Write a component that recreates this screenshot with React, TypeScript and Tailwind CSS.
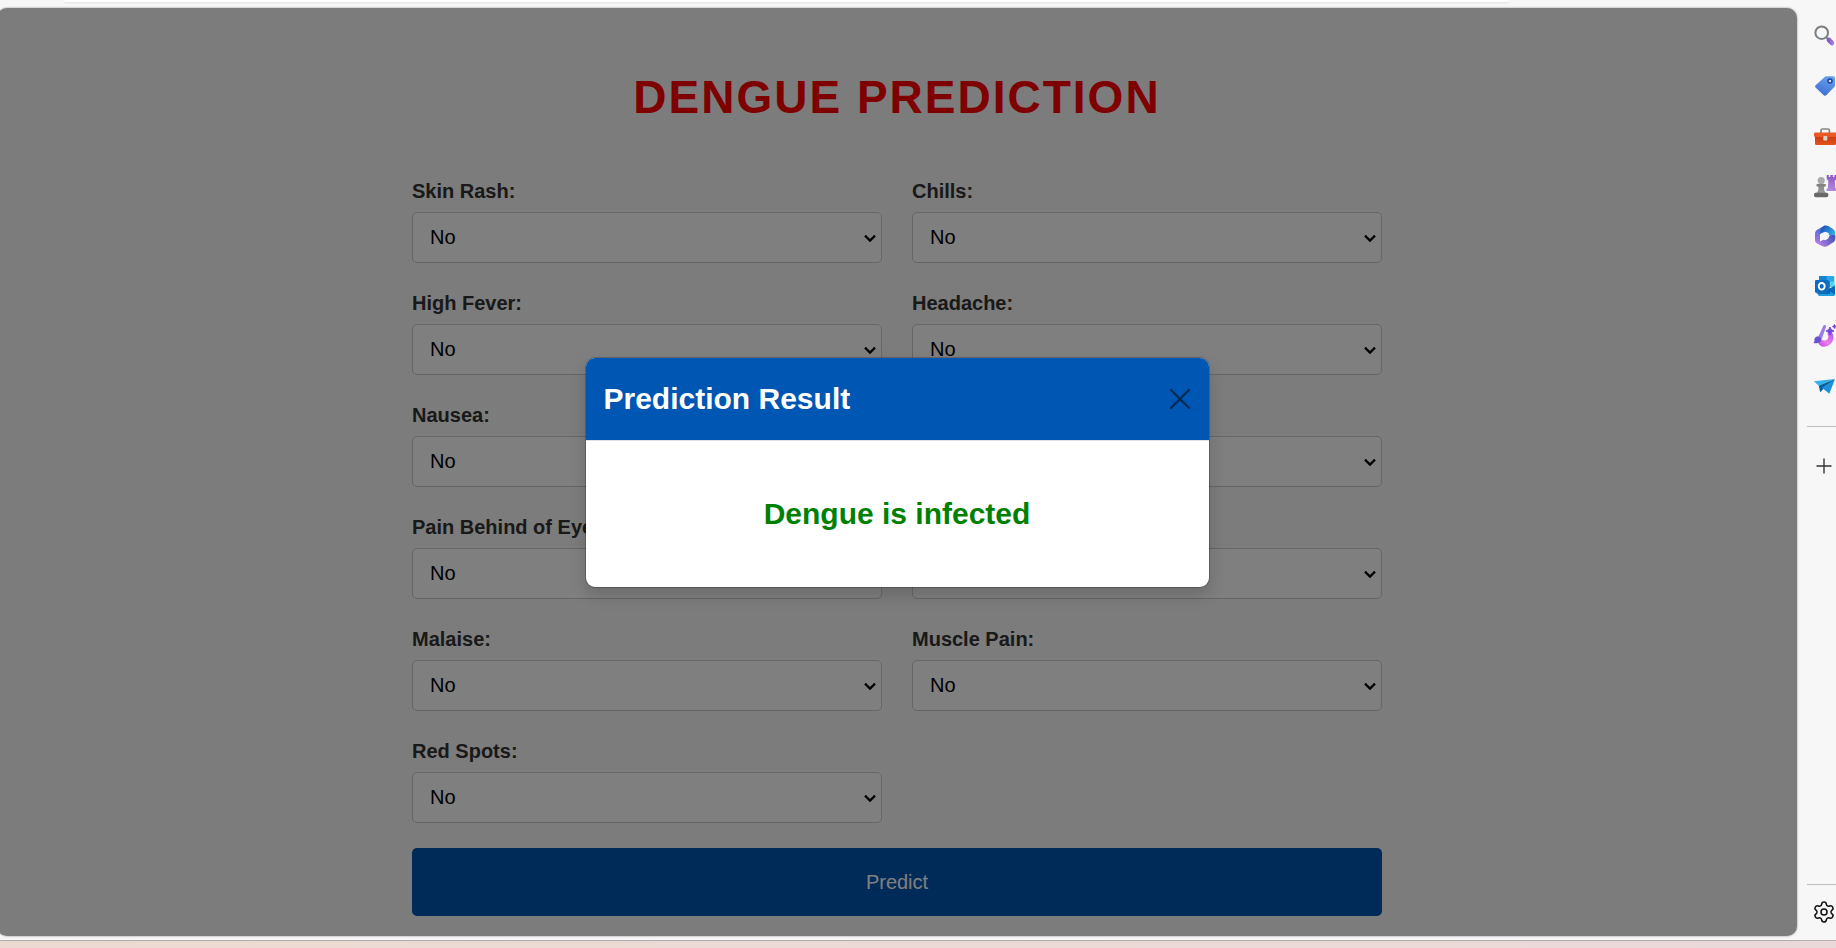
import React, { useState } from 'react';
import { Settings } from 'lucide-react';

const symptoms = [
  'Skin Rash',
  'Chills',
  'High Fever',
  'Headache',
  'Nausea',
  'Vomiting',
  'Pain Behind of Eyes',
  'Joint Pain',
  'Malaise',
  'Muscle Pain',
  'Red Spots',
];

function SymptomField({ name }: { name: string }) {
  const id = name.toLowerCase().replace(/ /g, '-');
  return (
    <div className="flex flex-col gap-1.5">
      <label htmlFor={id} className="text-[20px] leading-[30px] font-bold text-[#333333]">
        {name}:
      </label>
      <div className="relative">
        <select
          id={id}
          defaultValue="No"
          className="block h-[51px] w-full appearance-none rounded-[5px] border border-[#cccccc] bg-white px-[17px] pb-0.5 text-[20px] text-black"
        >
          <option>No</option>
          <option>Yes</option>
        </select>
        <svg
          className="pointer-events-none absolute top-1/2 right-1.5 h-3 w-3 -translate-y-1/2"
          viewBox="0 0 12 12"
          fill="none"
          stroke="#000"
          strokeWidth="2.2"
        >
          <path d="M1 3.6 6 8.6l5-5" />
        </svg>
      </div>
    </div>
  );
}

function SearchIcon() {
  return (
    <svg width="24" height="24" viewBox="0 0 24 24" fill="none">
      <path d="m13.2 13.2 2 2" stroke="#8a8a8a" strokeWidth="2" />
      <circle cx="8.7" cy="8.7" r="6.3" fill="#f4f8fa" stroke="#7d7d7d" strokeWidth="2" />
      <path d="m16 16 3 3" stroke="url(#handle)" strokeWidth="4.6" strokeLinecap="round" />
      <defs>
        <linearGradient id="handle" x1="14" y1="18" x2="21" y2="18" gradientUnits="userSpaceOnUse">
          <stop stopColor="#7b4cc2" />
          <stop offset="1" stopColor="#b183e0" />
        </linearGradient>
      </defs>
    </svg>
  );
}

function TagIcon() {
  return (
    <svg width="24" height="24" viewBox="0 0 24 24" fill="none">
      <path
        d="M11.4 3.2c.6-.7 1.3-1 2.1-1H20c1.2 0 2 .8 2 2v6.9c0 .8-.3 1.5-.8 2l-7.7 8c-.8.9-2 .9-2.8.1l-7.9-7.400c-.8-.8-.9-1.700-.2-2.500z"
        fill="url(#tag)"
      />
      <circle cx="17" cy="7" r="2" fill="#c8dcff" stroke="#23418f" strokeWidth="1.5" />
      <defs>
        <linearGradient id="tag" x1="17" y1="2" x2="10" y2="22" gradientUnits="userSpaceOnUse">
          <stop stopColor="#68a2f3" />
          <stop offset="1" stopColor="#416fd0" />
        </linearGradient>
      </defs>
    </svg>
  );
}

function ToolboxIcon() {
  return (
    <svg width="24" height="24" viewBox="0 0 24 24" fill="none">
      <path d="M8 9.5V6.600C8 5.700 8.700 5 9.600 5h5.200c.9 0 1.600.7 1.600 1.600v2.900" stroke="#858585" strokeWidth="1.7" />
      <rect x="2" y="11" width="21" height="10" rx="1.3" fill="url(#toolbox)" />
      <rect x="1" y="8.6" width="23" height="4.4" rx="1.2" fill="#ea5a24" />
      <rect x="10.3" y="12" width="4" height="4.6" rx="1.2" fill="#d8d4d2" />
      <defs>
        <linearGradient id="toolbox" x1="12" y1="12" x2="12" y2="21" gradientUnits="userSpaceOnUse">
          <stop stopColor="#c93a0b" />
          <stop offset="1" stopColor="#e2541c" />
        </linearGradient>
      </defs>
    </svg>
  );
}

function ChessIcon() {
  return (
    <svg width="24" height="24" viewBox="0 0 24 24" fill="none">
      <path
        d="M13.7 1h2.100v1.900h1.500V1h2.600v1.900h1.500V1h2.100v4.300l-1.700 1.400.5 7.200 1.400 1.300V17H13.600v-1.800l1.300-1.300.5-7.200-1.700-1.400z"
        fill="url(#rook)"
      />
      <circle cx="8.2" cy="6.6" r="3.6" fill="#a9a9a9" />
      <path d="M4.200 10h8c.9 0 1.300 2.200 0 2.600l-1.300.4c0 3 .6 5 2.700 6.500H2.800C5 18 5.500 16 5.500 13l-1.300-.4c-1.300-.4-.9-2.600 0-2.600z" fill="url(#pawn)" />
      <rect x="1" y="18.8" width="14.3" height="4.5" rx="1.8" fill="#686868" />
      <defs>
        <linearGradient id="rook" x1="19" y1="1" x2="19" y2="17" gradientUnits="userSpaceOnUse">
          <stop stopColor="#8c58c4" />
          <stop offset="1" stopColor="#b38bdc" />
        </linearGradient>
        <linearGradient id="pawn" x1="8" y1="10" x2="8" y2="20" gradientUnits="userSpaceOnUse">
          <stop stopColor="#808080" />
          <stop offset="1" stopColor="#a0a0a0" />
        </linearGradient>
      </defs>
    </svg>
  );
}

function OfficeIcon() {
  return (
    <svg width="24" height="24" viewBox="0 0 24 24" fill="none">
      <path d="M12.300 1.300 4.600 5.600C3 6.500 2 8 2 10v5.500c0 2 1 3.200 2.600 4l3.900 2.100c-1-1-1.500-2-1.500-3.600V10l7-4z" fill="url(#officeLeft)" />
      <path d="M10 2.600c1.500-1.300 3.500-1.500 5.300-.5l4.700 2.800c1.400.9 2.200 2.200 2.200 4v6.300l-6.700-4.400V9L9.500 8.500 7 10c0-3.500.8-5.900 3-7.400z" fill="url(#officeTop)" />
      <path d="M22.200 11.500v3.200c0 1.700-.8 3-2.200 3.900l-5 3.200c-2 1.200-4 1.200-6 .2l-4.400-2.400C3 18.800 2.100 17.500 2 16c1.500 2 4 2.300 6.500.8l10-6z" fill="url(#officeBottom)" />
      <path d="m12 7.800 3 .9 1.300 3-.9 2.600-2.900 1.900-3.300-1L8 12.100l1-2.700z" fill="#f7f7f7" />
      <defs>
        <linearGradient id="officeLeft" x1="10" y1="2" x2="5" y2="21" gradientUnits="userSpaceOnUse">
          <stop stopColor="#3c6bd4" />
          <stop offset="1" stopColor="#b679e4" />
        </linearGradient>
        <linearGradient id="officeTop" x1="9" y1="3" x2="22" y2="13" gradientUnits="userSpaceOnUse">
          <stop stopColor="#1c55b7" />
          <stop offset="1" stopColor="#36bdf0" />
        </linearGradient>
        <linearGradient id="officeBottom" x1="22" y1="12" x2="8" y2="22" gradientUnits="userSpaceOnUse">
          <stop stopColor="#3c50b4" />
          <stop offset="1" stopColor="#b27ce6" />
        </linearGradient>
      </defs>
    </svg>
  );
}

function OutlookIcon() {
  return (
    <svg width="24" height="24" viewBox="0 0 24 24" fill="none">
      <path d="M6 3.300C6 2.600 6.500 2 7.300 2H20c.7 0 1.300.6 1.300 1.300V13H6z" fill="#28a8ea" />
      <path d="M6 2h7.500v5.500H6z" fill="#1685cf" />
      <path d="M13.500 7.500h7.800V13h-7.800z" fill="#55d3f7" />
      <path d="m5 12.500 9 3.500 8-4v8.600c0 .8-.6 1.400-1.400 1.400H6.400c-.8 0-1.400-.6-1.400-1.400z" fill="#1b9de2" />
      <path d="M22 11.500v9.200L14 16z" fill="#0c68b7" />
      <rect x="3.5" y="7" width="13.5" height="13" rx="1.3" fill="#0b4e8d" opacity=".65" />
      <rect x="2" y="6" width="13.6" height="12.7" rx="1.3" fill="#0b6cc1" />
      <ellipse cx="8.7" cy="12.3" rx="3" ry="3.3" stroke="#fff" strokeWidth="1.9" />
    </svg>
  );
}

function DesignerIcon() {
  return (
    <svg width="24" height="24" viewBox="0 0 24 24" fill="none">
      <path d="M5 17c0-2 2-3 3.600-1.500 2.500 2.300 6.400.8 6.700-2.500.2-1.500-.8-2-.8-3.200 0-2.200 3.200-2.600 4.600-.7C22 13 20 19 15.500 21.600 10 24.500 5 21.500 5 17z" fill="url(#swirl)" />
      <path d="M10.600 1.300c.9-1 2.900 0 2.500 1.400L8.700 15l-3.500-2z" fill="#9a7be8" />
      <path d="M4 12.500c2.300-.6 5 1.200 4.200 4C7.500 19 4 20 .2 18.800c2-.8.8-2.800 1.500-4.300.4-1 1.200-1.700 2.300-2z" fill="#6d4fd0" />
      <path d="m17 3 1.300 2.700L21 7l-2.700 1.300L17 11l-1.300-2.700L13 7l2.700-1.300z" fill="#7547dd" stroke="#7547dd" />
      <path d="m21.500.2.700 1.600 1.600.7-1.600.7-.7 1.600-.7-1.600-1.600-.7 1.600-.7z" fill="#7547dd" stroke="#7547dd" strokeWidth=".6" />
      <defs>
        <linearGradient id="swirl" x1="19" y1="9" x2="8" y2="22" gradientUnits="userSpaceOnUse">
          <stop stopColor="#ad59e8" />
          <stop offset=".6" stopColor="#f07df0" />
          <stop offset="1" stopColor="#c355e0" />
        </linearGradient>
      </defs>
    </svg>
  );
}

function PlaneIcon() {
  return (
    <svg width="24" height="24" viewBox="0 0 24 24" fill="none">
      <path d="M22 5 1 7.200l4.700 4.600z" fill="#35b1ec" />
      <path d="M22 5 5.700 11.800l1.600 6.400 3-3.200z" fill="#0b5c9e" />
      <path d="M22 5 9 13.800l7.300 6z" fill="#1b91d8" />
    </svg>
  );
}

const tools = [
  { label: 'Search', Icon: SearchIcon },
  { label: 'Shopping', Icon: TagIcon },
  { label: 'Tools', Icon: ToolboxIcon },
  { label: 'Games', Icon: ChessIcon },
  { label: 'Microsoft 365', Icon: OfficeIcon },
  { label: 'Outlook', Icon: OutlookIcon },
  { label: 'Designer', Icon: DesignerIcon },
  { label: 'Drop', Icon: PlaneIcon },
];

function Sidebar() {
  return (
    <aside className="flex w-[39px] shrink-0 flex-col overflow-hidden pt-[11px] pb-0.5">
      {tools.map(({ label, Icon }) => (
        <button key={label} type="button" aria-label={label} className="flex h-[50px] items-center pl-4">
          <span className="shrink-0">
            <Icon />
          </span>
        </button>
      ))}
      <hr className="mt-[15px] ml-[10px] border-[#bcbcbc]" />
      <button type="button" aria-label="Add" className="mt-[14px] flex h-[50px] items-center pl-[19px]">
        <svg className="shrink-0" width="16" height="16" viewBox="0 0 16 16" stroke="#333" strokeWidth="1.4">
          <path d="M8 .5v15M.5 8h15" />
        </svg>
      </button>
      <hr className="mt-auto ml-[10px] border-[#bcbcbc]" />
      <button type="button" aria-label="Settings" className="flex h-[53px] items-center pl-[15px]">
        <Settings className="h-6 w-6 shrink-0" color="#111" strokeWidth={1.5} />
      </button>
    </aside>
  );
}

function ResultDialog({ onClose }: { onClose: () => void }) {
  return (
    <div className="absolute inset-0 flex items-center justify-center bg-black/50">
      <div
        role="dialog"
        aria-labelledby="result-title"
        className="w-full max-w-[625px] overflow-hidden rounded-[10px] border border-black/20 bg-white bg-clip-padding shadow-[0_8px_16px_rgba(0,0,0,0.15)]"
      >
        <div className="flex items-center justify-between border-b border-[#dee2e6] bg-[#0056b3] bg-clip-padding px-[18px] py-[18px]">
          <h2 id="result-title" className="text-[30px] leading-[46px] font-bold text-white">
            Prediction Result
          </h2>
          <button type="button" aria-label="Close" onClick={onClose} className="opacity-50">
            <svg width="22" height="22" viewBox="0 0 22 22" stroke="#000" strokeWidth="2.4" strokeLinecap="round">
              <path d="m2 2 18 18M20 2 2 20" />
            </svg>
          </button>
        </div>
        <p className="py-[50px] text-center text-[30px] leading-[46px] font-bold text-[#008000]">Dengue is infected</p>
      </div>
    </div>
  );
}

export default function App() {
  const [open, setOpen] = useState(true);
  return (
    <div className="flex min-h-screen flex-col overflow-hidden bg-[#f7f7f7] font-['Liberation_Sans',Arial,sans-serif]">
      <div className="flex flex-1">
        <div className="flex min-w-0 flex-1 flex-col pb-1">
          <div className="h-2">
            <div className="mr-[288px] ml-[64px] h-0.5 rounded-b-xl bg-white shadow-[0_1px_2px_rgba(0,0,0,0.1)]" />
          </div>
          <main className="relative -ml-[3px] flex-1 overflow-hidden rounded-[10px] bg-[#f8f8f8] px-4 pt-[61px] pb-[19px] shadow-[0_0_2px_rgba(0,0,0,0.5)]">
            <h1 className="text-center text-[46px] leading-[56px] font-bold tracking-[2px] text-[#ff0000]">
              DENGUE PREDICTION
            </h1>
            <form
              className="mx-auto mt-[51px] grid max-w-[970px] grid-cols-2 gap-x-[30px] gap-y-[25px]"
              onSubmit={(e) => {
                e.preventDefault();
                setOpen(true);
              }}
            >
              {symptoms.map((name) => (
                <SymptomField key={name} name={name} />
              ))}
              <button type="submit" className="col-span-2 h-[68px] rounded-[5px] bg-[#0056b3] text-[20px] text-white">
                Predict
              </button>
            </form>
            {open && <ResultDialog onClose={() => setOpen(false)} />}
          </main>
        </div>
        <Sidebar />
      </div>
      <footer className="h-2 border-t border-[#b5adad] bg-linear-to-r from-[#ecdad2] to-[#ead9d9]" />
    </div>
  );
}
